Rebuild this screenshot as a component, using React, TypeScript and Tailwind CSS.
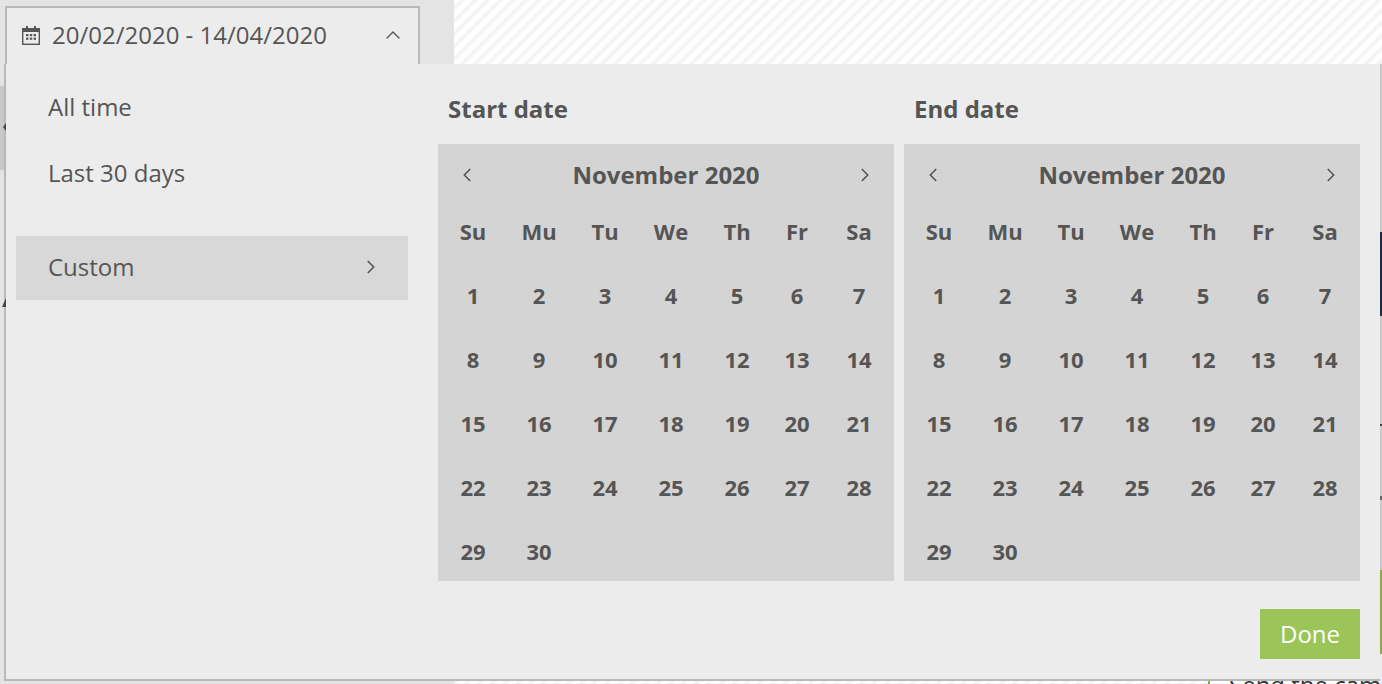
import { ChevronLeft, ChevronRight, ChevronUp } from "lucide-react";

const font = "font-['Open_Sans',sans-serif]";

const weeks = [
  [1, 2, 3, 4, 5, 6, 7],
  [8, 9, 10, 11, 12, 13, 14],
  [15, 16, 17, 18, 19, 20, 21],
  [22, 23, 24, 25, 26, 27, 28],
  [29, 30],
];

const dayNames = ["Su", "Mu", "Tu", "We", "Th", "Fr", "Sa"];

const stripes =
  "bg-[repeating-linear-gradient(135deg,#ffffff_0px,#ffffff_3px,#f1f1f1_6px,#ffffff_9px)]";

const CalendarIcon = () => (
  <svg width="18" height="20" viewBox="0 0 18 20" className="shrink-0">
    <rect x="0.7" y="3.7" width="16.6" height="15.6" fill="none" stroke="#555" strokeWidth="1.4" />
    <rect x="0" y="3" width="18" height="4" fill="#555" />
    <rect x="4" y="1" width="2" height="3" fill="#555" />
    <rect x="12" y="1" width="2" height="3" fill="#555" />
    <rect x="4" y="9" width="2.4" height="2.2" fill="#555" />
    <rect x="7.8" y="9" width="2.4" height="2.2" fill="#555" />
    <rect x="11.6" y="9" width="2.4" height="2.2" fill="#555" />
    <rect x="4" y="12.6" width="2.4" height="2.2" fill="#555" />
    <rect x="7.8" y="12.6" width="2.4" height="2.2" fill="#555" />
    <rect x="11.6" y="12.6" width="2.4" height="2.2" fill="#555" />
  </svg>
);

const Month = ({ label }: { label: string }) => (
  <div className="w-[456px]">
    <p className="pl-[10px] h-[80px] pt-[29px] text-[24px] leading-[32px] font-bold text-[#555]">{label}</p>
    <div className="bg-[#d4d4d4] h-[437px] pl-[2px] text-[#555] font-bold">
      <div className="flex items-center justify-between h-[62px] pl-[16px] pr-[18px]">
        <ChevronLeft size={22} strokeWidth={1.8} />
        <span className="text-[24px] leading-[32px]">November 2020</span>
        <ChevronRight size={22} strokeWidth={1.8} />
      </div>
      <div className="grid grid-cols-[66px_66px_66px_66px_66px_54px_70px] text-center text-[22px]">
        {dayNames.map((d) => (
          <div key={d} className="h-[56px] leading-[50px]">{d}</div>
        ))}
        {weeks.flat().map((n) => (
          <div key={n} className="h-[64px] leading-[66px]">{n}</div>
        ))}
      </div>
    </div>
  </div>
);

export default function App() {
  return (
    <div className={`${font} relative w-[1382px] h-[684px] overflow-hidden flex bg-white`}>
      {/* page behind the popup */}
      <div className="w-[454px] shrink-0 h-full bg-[#e4e4e4] pt-[86px]">
        <div className="w-[6px] h-[84px] bg-[#c8c8c8]" />
      </div>
      <div className="flex-1 min-w-0 h-full flex flex-col">
        <div className={`h-[64px] shrink-0 ${stripes}`} />
        <div className="flex-1 min-h-0 flex overflow-hidden">
          <div className={`w-[754px] shrink-0 ${stripes}`} />
          <div className="w-[2px] shrink-0 bg-[#8aab4a]" />
          <div className="flex-1 min-w-0 bg-white pl-[19px] pt-[605px] text-[24px] leading-[32px] text-[#333] whitespace-nowrap overflow-hidden">
            Send the cam
          </div>
          <div className="w-[2px] shrink-0 flex flex-col bg-[#c8c8c8]">
            <div className="h-[168px]" />
            <div className="h-[84px] bg-[#1f2a4a]" />
            <div className="h-[108px]" />
            <div className="h-[2px] bg-[#444]" />
            <div className="h-[70px]" />
            <div className="h-[4px] bg-[#666]" />
            <div className="h-[70px]" />
            <div className="h-[84px] bg-[#8aab4a]" />
            <div className="flex-1 bg-[#ececec]" />
          </div>
        </div>
      </div>

      {/* date button */}
      <div className="absolute left-[5px] top-[6px] w-[415px] h-[60px] border-2 border-[#b9b9b9] bg-[#ececec] flex items-center pl-[15px] pr-[15px] pb-[2px] text-[#555]">
        <CalendarIcon />
        <span className="ml-[12px] text-[24px] leading-[32px]">20/02/2020 - 14/04/2020</span>
        <ChevronUp size={24} strokeWidth={1.4} className="ml-auto -mr-[2px]" />
      </div>

      {/* popup */}
      <div className="absolute left-[4px] top-[64px] w-[1376px] h-[617px] border-l-2 border-b-2 border-[#b9b9b9] bg-[#ececec] flex text-[#555]">
        <div className="w-[432px] shrink-0 pl-[10px] pt-[10px]">
          <div className="h-[66px] pl-[32px] flex items-center text-[24px]">All time</div>
          <div className="h-[66px] pl-[32px] flex items-center text-[24px]">Last 30 days</div>
          <div className="mt-[30px] w-[392px] h-[64px] bg-[#d8d8d8] pl-[32px] pr-[26px] pb-[2px] flex items-center justify-between text-[24px]">
            Custom
            <ChevronRight size={22} strokeWidth={1.8} />
          </div>
        </div>
        <div className="flex-1">
          <div className="flex gap-[10px]">
            <Month label="Start date" />
            <Month label="End date" />
          </div>
          <div className="w-[922px] flex justify-end mt-[28px]">
            <button className="w-[100px] h-[50px] bg-[#9bc459] text-white text-[24px]">Done</button>
          </div>
        </div>
      </div>

      {/* bits of the page's arrows that show past the popup's edge */}
      <svg width="7" height="190" viewBox="0 0 7 190" className="absolute left-0 top-[120px]">
        <path d="M3 7 L6 3 V11 Z" fill="#444" />
        <path d="M2 187 L6 178 V187 Z" fill="#444" />
      </svg>
    </div>
  );
}
